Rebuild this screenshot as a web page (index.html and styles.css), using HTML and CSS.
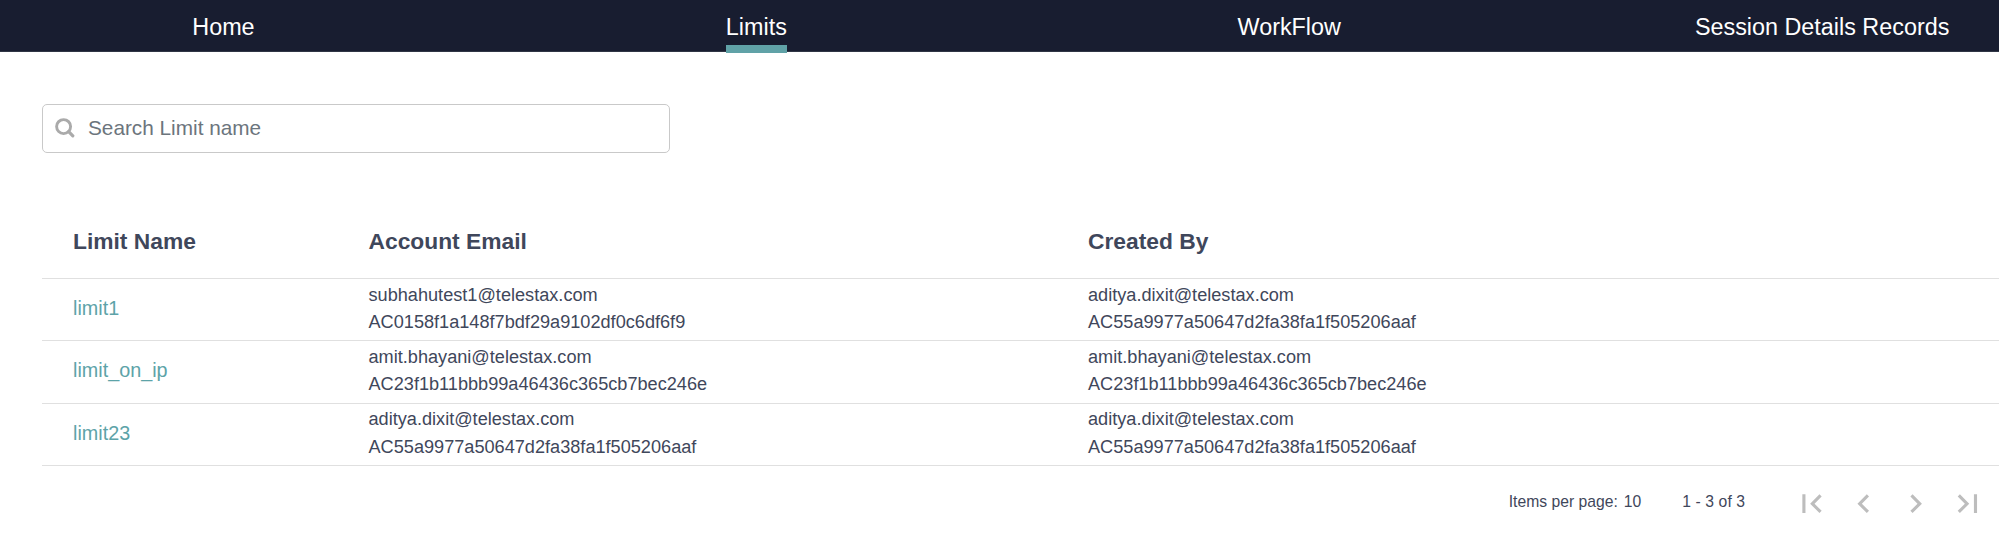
FILE: index.html
```html
<!DOCTYPE html>
<html lang="en">
<head>
<meta charset="utf-8">
<title>Limits</title>
<link rel="stylesheet" href="styles.css">
</head>
<body>
<header class="topbar">
  <nav class="nav">
    <a class="nav-item">Home</a>
    <a class="nav-item active">Limits</a>
    <a class="nav-item">WorkFlow</a>
    <a class="nav-item">Session Details Records</a>
  </nav>
</header>
<main class="content">
  <label class="search">
    <svg class="search-icon" viewBox="0 0 20 20"><circle cx="8.6" cy="8.6" r="7" fill="none" stroke="#aaa" stroke-width="2.9"/><path d="M13.7 13.7L17.8 17.8" stroke="#aaa" stroke-width="3.2" stroke-linecap="round"/></svg>
    <input class="search-input" type="text" placeholder="Search Limit name">
  </label>
  <div class="table">
    <div class="row head"><span>Limit Name</span><span>Account Email</span><span>Created By</span></div>
    <div class="row">
      <a class="name">limit1</a>
      <div class="cell"><div>subhahutest1@telestax.com</div><div>AC0158f1a148f7bdf29a9102df0c6df6f9</div></div>
      <div class="cell"><div>aditya.dixit@telestax.com</div><div>AC55a9977a50647d2fa38fa1f505206aaf</div></div>
    </div>
    <div class="row">
      <a class="name">limit_on_ip</a>
      <div class="cell"><div>amit.bhayani@telestax.com</div><div>AC23f1b11bbb99a46436c365cb7bec246e</div></div>
      <div class="cell"><div>amit.bhayani@telestax.com</div><div>AC23f1b11bbb99a46436c365cb7bec246e</div></div>
    </div>
    <div class="row">
      <a class="name">limit23</a>
      <div class="cell"><div>aditya.dixit@telestax.com</div><div>AC55a9977a50647d2fa38fa1f505206aaf</div></div>
      <div class="cell"><div>aditya.dixit@telestax.com</div><div>AC55a9977a50647d2fa38fa1f505206aaf</div></div>
    </div>
  </div>
  <footer class="paginator">
    <span class="page-size"><span>Items per page:</span><span>10</span></span>
    <span class="range">1 - 3 of 3</span>
    <div class="pager">
      <svg class="pager-icon" viewBox="0 0 24 24"><path d="M18.41 16.59L13.82 12l4.59-4.59L17 6l-6 6 6 6zM6 6h2v12H6z"/></svg>
      <svg class="pager-icon" viewBox="0 0 24 24"><path d="M15.41 7.41L14 6l-6 6 6 6 1.41-1.41L10.83 12z"/></svg>
      <svg class="pager-icon" viewBox="0 0 24 24"><path d="M10 6L8.59 7.41 13.17 12l-4.58 4.59L10 18l6-6z"/></svg>
      <svg class="pager-icon" viewBox="0 0 24 24"><path d="M5.59 7.41L10.18 12l-4.59 4.59L7 18l6-6-6-6zM16 6h2v12h-2z"/></svg>
    </div>
  </footer>
</main>
</body>
</html>
```
FILE: styles.css
```css
* { box-sizing: border-box; }
body {
  margin: 0;
  overflow: hidden;
  background: #fff;
  color: #3f475b;
  font-family: "Liberation Sans", Arial, sans-serif;
}
.topbar {
  height: 52px;
  background: #181d30;
  border-bottom: 1px solid #303645;
}
.nav {
  display: grid;
  grid-template-columns: repeat(4, 532.9px);
  justify-items: center;
  width: 2131.6px;
  margin-left: -43px;
}
.nav-item {
  height: 53px;
  padding-top: 14px;
  color: #fff;
  font-size: 23.36px;
  line-height: 27px;
}
.nav-item.active { border-bottom: 8px solid #60a2a7; }
.content { padding: 52px 0 0 41.5px; }
.search {
  display: flex;
  align-items: center;
  width: 628.5px;
  height: 49px;
  padding-left: 12.5px;
  border: 1px solid #c9c9c9;
  border-radius: 5px;
}
.search-icon { width: 20px; height: 20px; margin: 0 13px 1px 0; }
.search-input {
  flex: 1;
  min-width: 0;
  padding: 0 0 1px;
  border: 0;
  outline: 0;
  background: none;
  font: 20.77px "Liberation Sans", Arial, sans-serif;
}
.search-input::placeholder { color: #6c757d; opacity: 1; }
.table { margin-top: 51px; }
.row {
  display: grid;
  grid-template-columns: 295.5px 719.5px 1fr;
  align-items: center;
  height: 62.25px;
  padding: 0 0 1px 31.5px;
  border-bottom: 1px solid #e0e0e0;
}
.head {
  height: 75px;
  padding-bottom: 0;
  font-size: 22.8px;
  font-weight: bold;
}
.name { color: #5da3a8; font-size: 19.8px; padding-bottom: 1px; }
.cell { font-size: 18.15px; line-height: 27.2px; }
.paginator {
  display: flex;
  align-items: center;
  justify-content: flex-end;
  height: 72px;
  padding-right: 12.5px;
  font-size: 15.7px;
}
.page-size { display: flex; gap: 6px; margin-right: 41px; }
.range { margin-right: 48px; letter-spacing: .1px; }
.pager { display: flex; gap: 14.6px; padding-top: 3px; }
.pager-icon { width: 37.4px; height: 37.4px; fill: #bdbdbd; }
```
